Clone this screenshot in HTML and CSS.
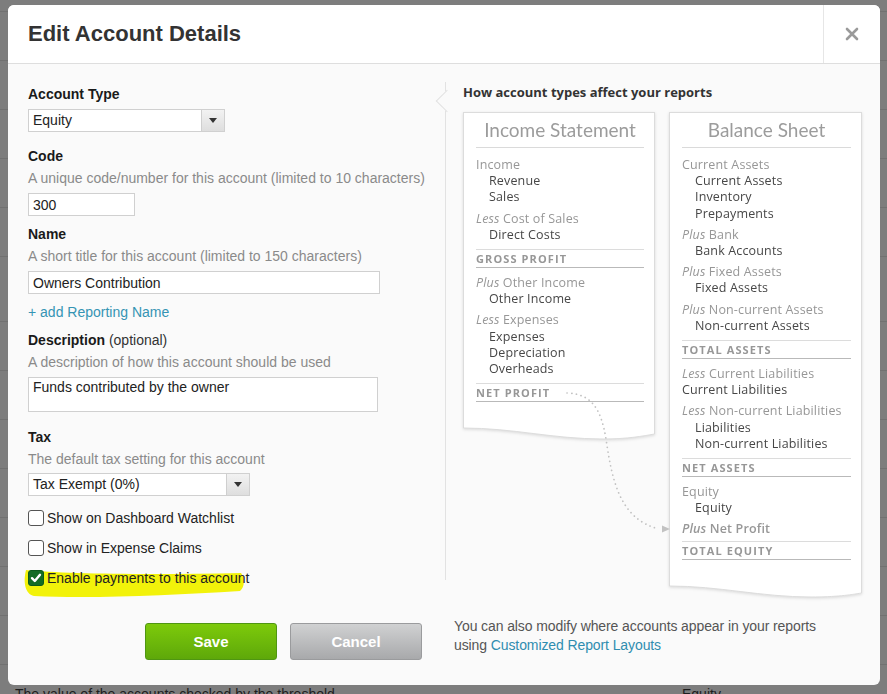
FILE: index.html
```html
<!DOCTYPE html>
<html>
<head>
<meta charset="utf-8">
<title>Edit Account Details</title>
<link rel="stylesheet" href="styles.css">
</head>
<body>
<div class="page">
  <div class="bg-spacer"></div>
  <div class="bg-row"></div>
  <div class="bg-row"></div>
  <div class="bg-row"></div>
  <div class="bg-row"></div>
  <div class="bg-row"></div>
  <div class="bg-row bg-row-tall"></div>
  <div class="bg-row"></div>
  <div class="bg-row"></div>
  <div class="bg-row"></div>
  <div class="bg-row"></div>
  <div class="bg-row"></div>
  <div class="bg-row"></div>
  <div class="bg-row"></div>
  <div class="bg-foot"><span class="bg-foot-left">The value of the accounts checked by the threshold</span><span>Equity</span></div>
</div>

<div class="modal">
  <header class="modal-head">
    <h1 class="modal-title">Edit Account Details</h1>
    <div class="close-cell">
      <svg class="close-icon" width="14" height="14" viewBox="0 0 14 14"><path d="M2 2 L12 12 M12 2 L2 12" stroke="#9a9a9a" stroke-width="2.6" stroke-linecap="round"/></svg>
    </div>
  </header>

  <div class="modal-body">
    <div class="form">
      <div class="group">
        <div class="label">Account Type</div>
        <div class="select select-type"><span class="select-value">Equity</span><span class="select-btn"><i class="caret"></i></span></div>
      </div>

      <div class="group g-lg">
        <div class="label">Code</div>
        <div class="help">A unique code/number for this account (limited to 10 characters)</div>
        <input class="input input-code" type="text" value="300">
      </div>

      <div class="group g-sm">
        <div class="label">Name</div>
        <div class="help">A short title for this account (limited to 150 characters)</div>
        <input class="input input-name" type="text" value="Owners Contribution">
      </div>

      <div class="add-link">+ add Reporting Name</div>

      <div class="group g-xs">
        <div class="label">Description <span class="optional">(optional)</span></div>
        <div class="help">A description of how this account should be used</div>
        <textarea class="textarea">Funds contributed by the owner</textarea>
      </div>

      <div class="group g-lg2">
        <div class="label">Tax</div>
        <div class="help">The default tax setting for this account</div>
        <div class="select select-tax"><span class="select-value">Tax Exempt (0%)</span><span class="select-btn"><i class="caret"></i></span></div>
      </div>

      <div class="checks">
        <div class="check"><span class="box"></span><span class="check-text">Show on Dashboard Watchlist</span></div>
        <div class="check"><span class="box"></span><span class="check-text">Show in Expense Claims</span></div>
        <div class="check">
          <svg class="highlight" width="232" height="44" viewBox="0 0 232 44"><path d="M4,11 C40,15 130,16 219,14 C223,19 223,28 218,32 C150,36 70,40 12,37 C3,35 1,23 4,11 Z" fill="#f2f20a"/></svg>
          <span class="box box-on"><svg width="14" height="14" viewBox="0 0 14 14"><path d="M3 7.2 L5.8 10 L11 3.8" fill="none" stroke="#fff" stroke-width="2.4" stroke-linecap="round" stroke-linejoin="round"/></svg></span>
          <span class="check-text">Enable payments to this account</span>
        </div>
      </div>
    </div>

    <div class="reports">
      <div class="reports-title">How account types affect your reports</div>
      <div class="cards">
        <div class="card card-income">
          <div class="card-body">
            <div class="card-title">Income Statement</div>
            <div class="grp"><div class="hd">Income</div><div class="it">Revenue</div><div class="it">Sales</div></div>
            <div class="grp"><div class="hd"><em>Less</em> Cost of Sales</div><div class="it">Direct Costs</div></div>
            <div class="sep">GROSS PROFIT</div>
            <div class="grp"><div class="hd"><em>Plus</em> Other Income</div><div class="it">Other Income</div></div>
            <div class="grp"><div class="hd"><em>Less</em> Expenses</div><div class="it">Expenses</div><div class="it">Depreciation</div><div class="it">Overheads</div></div>
            <div class="sep">NET PROFIT</div>
          </div>
          <svg class="card-wave" width="192" height="14" viewBox="0 0 192 14">
            <path d="M0,0 L0,1 C50,1 90,12 140,12 C165,12 180,9 192,7 L192,0 Z" fill="#fff"/>
            <path d="M0.5,0 L0.5,1 C50,1 90,12 140,12 C165,12 180,9 191.5,7 L191.5,0" fill="none" stroke="#dcdcdc"/>
          </svg>
        </div>

        <div class="card card-balance">
          <div class="card-body">
            <div class="card-title">Balance Sheet</div>
            <div class="grp"><div class="hd">Current Assets</div><div class="it">Current Assets</div><div class="it">Inventory</div><div class="it">Prepayments</div></div>
            <div class="grp"><div class="hd"><em>Plus</em> Bank</div><div class="it">Bank Accounts</div></div>
            <div class="grp"><div class="hd"><em>Plus</em> Fixed Assets</div><div class="it">Fixed Assets</div></div>
            <div class="grp"><div class="hd"><em>Plus</em> Non-current Assets</div><div class="it">Non-current Assets</div></div>
            <div class="sep">TOTAL ASSETS</div>
            <div class="grp"><div class="hd"><em>Less</em> Current Liabilities</div><div class="it it-flat">Current Liabilities</div></div>
            <div class="grp"><div class="hd"><em>Less</em> Non-current Liabilities</div><div class="it">Liabilities</div><div class="it">Non-current Liabilities</div></div>
            <div class="sep">NET ASSETS</div>
            <div class="grp"><div class="hd">Equity</div><div class="it">Equity</div></div>
            <div class="grp"><div class="hd hd-strong"><em>Plus</em> Net Profit</div></div>
            <div class="sep sep-tight">TOTAL EQUITY</div>
          </div>
          <svg class="card-wave" width="193" height="14" viewBox="0 0 193 14">
            <path d="M0,0 L0,1 C50,1 92,12 142,12 C167,12 181,10 193,8 L193,0 Z" fill="#fff"/>
            <path d="M0.5,0 L0.5,1 C50,1 92,12 142,12 C167,12 181,10 192.5,8 L192.5,0" fill="none" stroke="#dcdcdc"/>
          </svg>
        </div>
      </div>
      <svg class="flow-arrow" width="435" height="540" viewBox="0 0 435 540">
        <path d="M122,329 C147,330 156,345 161,375 C167,415 174,455 214,465" fill="none" stroke="#c2c2c2" stroke-width="1.7" stroke-dasharray="0.1 4.6" stroke-linecap="round"/>
        <polygon points="217,461.5 225,465 217,468.5" fill="#c2c2c2"/>
      </svg>
    </div>
  </div>

  <div class="modal-foot">
    <div class="buttons">
      <button class="btn btn-save">Save</button>
      <button class="btn btn-cancel">Cancel</button>
    </div>
    <div class="foot-note">You can also modify where accounts appear in your reports<br>using <span class="link">Customized Report Layouts</span></div>
  </div>
</div>
</body>
</html>
```

FILE: styles.css
```css
* { box-sizing: border-box; }
html, body { margin: 0; padding: 0; }
body {
  width: 887px;
  height: 694px;
  overflow: hidden;
  background: #7d7d7d;
  font-family: "Liberation Sans", Arial, sans-serif;
  position: relative;
}

/* backdrop page (dimmed) */
.page { height: 694px; }
.bg-spacer { height: 12px; border-bottom: 1px solid #717171; }
.bg-row { height: 49px; border-bottom: 1px solid #717171; }
.bg-row-tall { height: 65px; }
.bg-foot {
  display: flex;
  padding: 21px 0 0 15px;
  font-size: 14px;
  line-height: 17px;
  color: #1e1e1e;
}
.bg-foot-left { width: 667px; }

/* modal */
.modal {
  position: absolute;
  left: 8px;
  top: 5px;
  width: 872px;
  height: 680px;
  background: #fafafa;
  border-radius: 6px;
  overflow: hidden;
}
.modal-head {
  display: flex;
  height: 59px;
  background: #fff;
  border-bottom: 1px solid #dedede;
}
.modal-title {
  flex: 1;
  margin: 0;
  padding-left: 20px;
  font-size: 22px;
  font-weight: bold;
  line-height: 57px;
  color: #333;
}
.close-cell {
  width: 57px;
  border-left: 1px solid #e6e6e6;
  display: flex;
  align-items: center;
  justify-content: center;
}

.modal-body {
  display: grid;
  grid-template-columns: 437px 435px;
}

/* form column */
.form {
  padding: 19px 0 0 20px;
  font-size: 14px;
  color: #222;
}
.label {
  font-weight: bold;
  line-height: 22px;
  color: #1a1a1a;
}
.optional { font-weight: normal; color: #333; }
.help {
  line-height: 22px;
  color: #8a8a8a;
}
.g-lg { margin-top: 13px; }
.g-sm { margin-top: 7px; }
.g-xs { margin-top: 6px; }
.g-lg2 { margin-top: 14px; }

.select {
  display: flex;
  height: 23px;
  margin-top: 4px;
  border: 1px solid #d0d0d0;
  background: #fff;
}
.select-type { width: 197px; }
.select-tax { width: 222px; margin-top: 3px; }
.select-value {
  flex: 1;
  padding-left: 4px;
  line-height: 21px;
  color: #222;
}
.select-btn {
  width: 23px;
  border-left: 1px solid #cfcfcf;
  background: linear-gradient(#f2f2f2, #dedede);
  display: flex;
  align-items: center;
  justify-content: center;
}
.caret {
  width: 0;
  height: 0;
  border-left: 4.5px solid transparent;
  border-right: 4.5px solid transparent;
  border-top: 5px solid #333;
}

.input {
  display: block;
  height: 23px;
  margin: 4px 0 0;
  padding: 0 4px;
  border: 1px solid #d0d0d0;
  background: #fff;
  font-family: "Liberation Sans", Arial, sans-serif;
  font-size: 14px;
  color: #222;
  outline: none;
}
.input-code { width: 107px; }
.input-name { width: 352px; }
.textarea {
  display: block;
  width: 350px;
  height: 35px;
  margin: 4px 0 0;
  padding: 1px 4px;
  border: 1px solid #d0d0d0;
  background: #fff;
  font-family: "Liberation Sans", Arial, sans-serif;
  font-size: 14px;
  line-height: 17px;
  color: #222;
  resize: none;
  outline: none;
}
.add-link {
  margin-top: 7px;
  line-height: 22px;
  color: #3594b4;
}

.checks {
  margin-top: 11px;
  display: flex;
  flex-direction: column;
  gap: 8px;
}
.check {
  position: relative;
  display: flex;
  align-items: center;
  height: 22px;
  color: #222;
}
.box {
  position: relative;
  z-index: 1;
  width: 16px;
  height: 16px;
  margin-right: 3px;
  border: 1px solid #555;
  border-radius: 3px;
  background: #fff;
  display: flex;
  align-items: center;
  justify-content: center;
}
.box-on {
  background: #146c25;
  border-color: #0c5a1c;
}
.check-text { position: relative; z-index: 1; }
.highlight {
  position: absolute;
  left: -6px;
  top: -8px;
  z-index: 0;
}

/* reports column */
.reports {
  position: relative;
  padding: 18px 18px 0 18px;
  font-family: "Open Sans", Lato, sans-serif;
}
.reports::before {
  content: "";
  position: absolute;
  left: 0;
  top: 18px;
  width: 1px;
  height: 498px;
  background: #e2e2e2;
}
.reports::after {
  content: "";
  position: absolute;
  left: -6px;
  top: 29px;
  width: 15px;
  height: 15px;
  background: #fafafa;
  border-left: 1px solid #e2e2e2;
  border-bottom: 1px solid #e2e2e2;
  transform: rotate(45deg);
}
.reports-title {
  line-height: 20px;
  font-size: 13px;
  font-weight: bold;
  color: #333;
}
.cards {
  display: flex;
  align-items: flex-start;
  gap: 14px;
  margin-top: 10px;
}
.card {
  filter: drop-shadow(0 1px 1.5px rgba(0, 0, 0, 0.13));
}
.card-income { width: 192px; }
.card-balance { width: 193px; }
.card-body {
  background: #fff;
  border: 1px solid #dcdcdc;
  border-bottom: 0;
  padding: 5px 10px 19px 12px;
}
.card-wave { display: block; margin-top: -1px; }
.card-title {
  font-family: Lato, "Open Sans", sans-serif;
  font-size: 19px;
  line-height: 24px;
  text-align: center;
  color: #9c9c9c;
  padding-bottom: 5px;
  border-bottom: 1px solid #dadada;
  margin-bottom: 9px;
}
.grp {
  margin-top: 5px;
  font-size: 12.5px;
  line-height: 16.2px;
  letter-spacing: 0.15px;
}
.hd { color: #979797; }
.hd em { font-style: italic; }
.hd-strong { font-weight: 600; }
.it { padding-left: 13px; color: #474747; }
.it-flat { padding-left: 0; }
.sep {
  margin: 6px 0 7px;
  border-top: 1px solid #dcdcdc;
  border-bottom: 1px solid #b9b9b9;
  font-size: 11px;
  font-weight: bold;
  letter-spacing: 1.1px;
  line-height: 17px;
  color: #979797;
}
.sep-tight { margin-top: 3px; }
.flow-arrow {
  position: absolute;
  left: 0;
  top: 0;
  pointer-events: none;
}

/* footer */
.modal-foot {
  display: grid;
  grid-template-columns: 437px 435px;
  align-items: start;
  padding-top: 24px;
}
.buttons {
  display: flex;
  justify-content: flex-end;
  gap: 13px;
  padding-right: 23px;
}
.btn {
  width: 132px;
  height: 37px;
  border-radius: 3px;
  font-family: "Liberation Sans", Arial, sans-serif;
  font-size: 15px;
  font-weight: bold;
  color: #fff;
  cursor: pointer;
}
.btn-save {
  background: linear-gradient(#7dca0b, #5ea80a);
  border: 1px solid #4f9612;
}
.btn-cancel {
  background: linear-gradient(#d0d1d2, #a8a9ab);
  border: 1px solid #9a9b9d;
}
.foot-note {
  margin-top: -6px;
  padding-left: 9px;
  font-size: 14px;
  line-height: 19px;
  letter-spacing: -0.1px;
  color: #555;
}
.link { color: #2f8db0; }
```
